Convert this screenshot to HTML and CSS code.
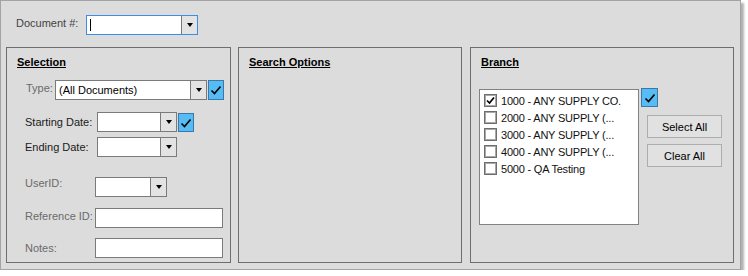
FILE: index.html
```html
<!DOCTYPE html>
<html lang="en">
<head>
    <meta charset="UTF-8">
    <title>Document Search</title>
    <link rel="stylesheet" href="styles.css">
</head>
<body>
    <div class="window">
        <div class="doc-row">
            <span class="lbl doc-lbl">Document #:</span>
            <div class="combo doc-combo">
                <span class="value"><i class="cursor"></i></span>
                <span class="drop"><i class="arrow"></i></span>
            </div>
        </div>

        <div class="panels">
            <!-- Selection -->
            <section class="panel selection">
                <h2 class="panel-title">Selection</h2>

                <div class="row row-type">
                    <span class="lbl muted w-type">Type:</span>
                    <div class="combo type-combo">
                        <span class="value">(All Documents)</span>
                        <span class="drop"><i class="arrow"></i></span>
                    </div>
                    <span class="check-btn">
                        <svg width="12" height="12" viewBox="0 0 12 12"><path d="M1.5 6.5 L4.5 9.5 L10.5 2.5" fill="none" stroke="#000" stroke-width="1.6"/></svg>
                    </span>
                </div>

                <div class="row row-start">
                    <span class="lbl w-date">Starting Date:</span>
                    <div class="combo date-combo">
                        <span class="value"></span>
                        <span class="drop"><i class="arrow"></i></span>
                    </div>
                    <span class="check-btn short">
                        <svg width="12" height="12" viewBox="0 0 12 12"><path d="M1.5 6.5 L4.5 9.5 L10.5 2.5" fill="none" stroke="#000" stroke-width="1.6"/></svg>
                    </span>
                </div>

                <div class="row row-end">
                    <span class="lbl w-date">Ending Date:</span>
                    <div class="combo date-combo">
                        <span class="value"></span>
                        <span class="drop"><i class="arrow"></i></span>
                    </div>
                </div>

                <div class="row row-user">
                    <span class="lbl muted w-field lift">UserID:</span>
                    <div class="combo user-combo">
                        <span class="value"></span>
                        <span class="drop"><i class="arrow"></i></span>
                    </div>
                </div>

                <div class="row row-ref">
                    <span class="lbl muted w-field lift-sm">Reference ID:</span>
                    <div class="field"></div>
                </div>

                <div class="row row-notes">
                    <span class="lbl muted w-field">Notes:</span>
                    <div class="field"></div>
                </div>
            </section>

            <!-- Search Options -->
            <section class="panel search">
                <h2 class="panel-title">Search Options</h2>
            </section>

            <!-- Branch -->
            <section class="panel branch">
                <h2 class="panel-title">Branch</h2>
                <div class="branch-body">
                    <ul class="listbox">
                        <li class="item"><span class="box checked"><svg width="9" height="9" viewBox="0 0 9 9"><path d="M1 4.5 L3.5 7 L8 1.5" fill="none" stroke="#000" stroke-width="1.7"/></svg></span>1000 - ANY SUPPLY CO.</li>
                        <li class="item"><span class="box"></span>2000 - ANY SUPPLY (...</li>
                        <li class="item"><span class="box"></span>3000 - ANY SUPPLY (...</li>
                        <li class="item"><span class="box"></span>4000 - ANY SUPPLY (...</li>
                        <li class="item"><span class="box"></span>5000 - QA Testing</li>
                    </ul>
                    <div class="branch-side">
                        <span class="check-btn wide">
                            <svg width="12" height="12" viewBox="0 0 12 12"><path d="M1.5 6.5 L4.5 9.5 L10.5 2.5" fill="none" stroke="#000" stroke-width="1.6"/></svg>
                        </span>
                        <button class="btn select-all">Select All</button>
                        <button class="btn clear-all">Clear All</button>
                    </div>
                </div>
            </section>
        </div>
    </div>
</body>
</html>
```

FILE: styles.css
```css
:root {
    --face: #dcdcdc;
    --edge: #6e6e6e;
    --ctrl-border: #7a7a7a;
    --check-blue: #56bcf3;
}

* {
    box-sizing: border-box;
}

body {
    margin: 0;
    background: #fff;
    font-family: 'Liberation Sans', Arial, sans-serif;
    font-size: 11px;
    color: #111;
}

.window {
    width: 741px;
    height: 270px;
    border: 1px solid #a3a3a3;
    background: var(--face);
    box-shadow: 3px 3px 2px rgba(0, 0, 0, 0.3);
    padding: 14px 6px 6px 5px;
    display: flex;
    flex-direction: column;
}

/* Top row */
.doc-row {
    display: flex;
    align-items: center;
    height: 20px;
    padding-left: 10px;
}

.lbl {
    white-space: nowrap;
}

.doc-lbl {
    width: 70px;
    color: #444;
    margin-bottom: 4px;
}

.muted {
    color: #6a6a6a;
}

/* Combo boxes */
.combo {
    display: flex;
    height: 20px;
    border: 1px solid var(--ctrl-border);
    background: #fff;
}

.combo .value {
    flex: 1;
    padding-left: 3px;
    line-height: 18px;
    color: #000;
    white-space: nowrap;
    overflow: hidden;
}

.drop {
    width: 16px;
    border-left: 1px solid var(--ctrl-border);
    background: #e3e3e3;
    display: flex;
    align-items: center;
    justify-content: center;
}

.arrow {
    width: 0;
    height: 0;
    border-left: 3.5px solid transparent;
    border-right: 3.5px solid transparent;
    border-top: 4px solid #000;
}

.doc-combo {
    width: 112px;
    border-color: #3d8de4;
}

.cursor {
    display: block;
    width: 1px;
    height: 12px;
    margin-top: 3px;
    background: #000;
}

.type-combo { width: 152px; }
.date-combo { width: 80px; }
.user-combo { width: 72px; }

.field {
    width: 128px;
    height: 20px;
    border: 1px solid var(--ctrl-border);
    background: #fff;
}

/* Blue check toggles */
.check-btn {
    width: 16px;
    height: 20px;
    margin-left: 1px;
    border: 1px solid #3b78a8;
    background: var(--check-blue);
    display: flex;
    align-items: center;
    justify-content: center;
}

.check-btn.short {
    height: 19px;
}

.check-btn.wide {
    width: 17px;
    height: 19px;
    margin-left: 0;
}

/* Panels */
.panels {
    display: flex;
    gap: 7px;
    margin-top: 12px;
    flex: 1;
}

.panel {
    border: 1px solid var(--edge);
    padding-top: 8px;
}

.selection { width: 225px; }
.search { width: 224px; }
.branch { width: 264px; margin-left: 1px; }

.panel-title {
    margin: 0 0 0 10px;
    font-size: 11px;
    line-height: 13px;
    font-weight: bold;
    text-decoration: underline;
    color: #000;
}

/* Selection rows */
.row {
    display: flex;
    align-items: center;
    height: 20px;
    padding-left: 18px;
}

.row-type { margin-top: 11px; padding-left: 19px; }
.row-start { margin-top: 12px; }
.row-end { margin-top: 5px; }
.row-user { margin-top: 20px; }
.row-ref { margin-top: 11px; }
.row-notes { margin-top: 10px; }

.row-start .check-btn { margin-left: 1px; margin-top: 1px; }

.w-type { width: 29px; margin-bottom: 4px; }
.w-date { width: 72px; color: #1a1a1a; }
.w-field { width: 70px; }

.lift { margin-bottom: 8px; }
.lift-sm { margin-bottom: 4px; }

/* Branch */
.branch-body {
    display: flex;
    margin-top: 20px;
    padding-left: 8px;
}

.listbox {
    list-style: none;
    margin: 0;
    width: 160px;
    height: 136px;
    padding: 2px 0 0 4px;
    border: 1px solid #828282;
    background: #fff;
}

.item {
    display: flex;
    align-items: center;
    gap: 4px;
    height: 17px;
    color: #111;
    white-space: nowrap;
    letter-spacing: -0.2px;
}

.box {
    width: 13px;
    height: 13px;
    border: 1px solid #6e6e6e;
    box-shadow: inset 0 0 0 1px #a8a8a8;
    background: #fff;
    display: flex;
    align-items: center;
    justify-content: center;
}

.branch-side {
    display: flex;
    flex-direction: column;
    align-items: flex-start;
    margin-left: 2px;
    margin-top: -1px;
}

.btn {
    width: 75px;
    height: 23px;
    margin-left: 6px;
    padding: 0;
    border: 1px solid #adadad;
    background: #e1e1e1;
    font-family: inherit;
    font-size: 11px;
    color: #000;
}

.select-all { margin-top: 8px; }
.clear-all { margin-top: 6px; }
```
